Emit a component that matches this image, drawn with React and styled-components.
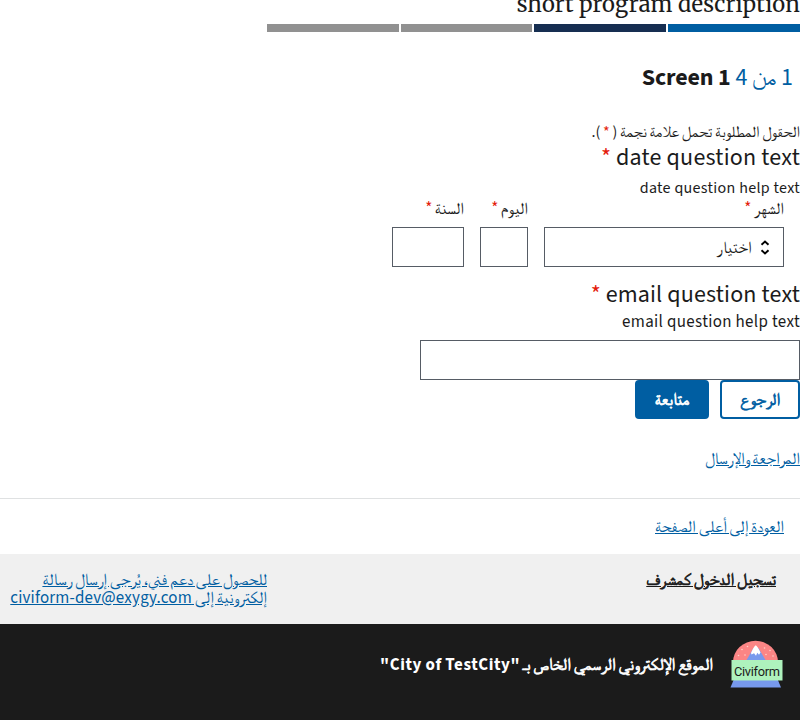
import React from "react";
import styled, { createGlobalStyle } from "styled-components";

const GlobalStyle = createGlobalStyle`
  *, *::before, *::after { box-sizing: border-box; }
  html, body { margin: 0; background: #fff; overflow: hidden; }
  body { font-family: "Source Sans 3", "FreeSerif", sans-serif; color: #1b1b1b; }
`;

const Page = styled.div`
  width: 800px;
  height: 720px;
  overflow: hidden;
  display: flex;
  flex-direction: column;
`;
const Description = styled.p`
  display: flex;
  align-items: flex-end;
  margin: 0;
  height: 24px;
  padding-bottom: 4px;
  font: 22px/32px "Merriweather", "DejaVu Serif", serif;
  letter-spacing: 0.15px;
`;
const Progress = styled.div`
  display: grid;
  grid-template-columns: repeat(4, 1fr);
  gap: 2px;
  width: 533.33px;
  height: 8px;
`;
const Segment = styled.div`
  background: ${(p) => p.$color};
`;
const Heading = styled.h1`
  margin: 30px 0 0;
  padding-right: 7px;
  font-size: 24px;
  line-height: 32px;
  font-weight: 700;
`;
const Counter = styled.span`
  color: #005ea2;
  font-weight: 400;
`;
const Latin = styled.span`
  letter-spacing: ${(p) => p.$track || 0}px;
`;
const BoldArabic = styled.span`
  font-weight: 400;
  -webkit-text-stroke: 0.7px currentColor;
`;
const Star = styled.span`
  color: #e41d0d;
`;
const Required = styled.p`
  margin: 28px 0 0;
  font-size: 16px;
  line-height: 20px;
  word-spacing: -0.5px;
`;
const Question = styled.h2`
  margin: ${(p) => p.$top || 0}px 0 0;
  font-size: 24px;
  font-weight: 400;
  line-height: 31px;
`;
const Help = styled.p`
  margin: ${(p) => p.$top}px 0 ${(p) => p.$bottom}px;
  font-size: ${(p) => p.$size}px;
  line-height: 20px;
`;
const DateRow = styled.div`
  display: flex;
  gap: 16px;
  padding-right: 16px;
`;
const Field = styled.label`
  width: ${(p) => p.$w}px;
  font-size: 16.96px;
  line-height: 20px;
`;
const LabelText = styled.span`
  display: block;
  height: 28px;
  word-spacing: -0.8px;
`;
const Box = styled.div`
  display: flex;
  align-items: center;
  gap: 9px;
  width: ${(p) => p.$w}px;
  height: 40px;
  padding: 1px 13px 0;
  border: 1px solid #565c65;
  font-size: 16.96px;
`;
const Buttons = styled.div`
  display: flex;
  gap: 11px;
`;
const Button = styled.button`
  width: ${(p) => p.$w}px;
  height: 39px;
  padding: 0;
  border: 2px solid #005ea2;
  border-radius: 4px;
  background: ${(p) => (p.$filled ? "#005ea2" : "#fff")};
  color: ${(p) => (p.$filled ? "#fff" : "#005ea2")};
  font-family: inherit;
  font-size: 16.96px;
`;
const Link = styled.a`
  color: ${(p) => (p.$dark ? "#1b1b1b" : "#005ea2")};
  text-decoration: underline;
`;
const Review = styled.div`
  margin: 30px 0 29px;
  font-size: 16.96px;
  line-height: 20px;
  word-spacing: -0.7px;
`;
const ReturnBar = styled.div`
  height: 56px;
  border-top: 1px solid #dfe1e2;
  padding: 18px 16px 0;
  font-size: 16.96px;
  line-height: 20px;
  word-spacing: -0.3px;
`;
const Support = styled.div`
  display: flex;
  justify-content: space-between;
  height: 70px;
  padding: 17px 24px 0 0;
  background: #f0f0f0;
  font-size: 16.96px;
  line-height: 18.4px;
  word-spacing: -0.5px;
`;
const Contact = styled.div`
  width: 267px;
`;
const Footer = styled.footer`
  display: flex;
  height: 96px;
  padding: 16px 17px 0;
  gap: 17px;
  background: #1b1b1b;
  color: #fff;
  font-size: 16.96px;
  font-weight: 700;
  line-height: 50px;
  word-spacing: -0.5px;
`;

const Arrows = () => (
  <svg width="10" height="16" viewBox="0 0 10 16" fill="none" stroke="#000" strokeWidth="1.9">
    <path d="M1.500 4.700 5 1.500 8.500 4.700M1.500 10.300 5 13.500 8.500 10.300" />
  </svg>
);
const Logo = () => (
  <svg width="53" height="48" viewBox="0 0 53 48">
    <path d="M3 22a22.500 21.200 0 0 1 45 0z" fill="#fb8585" />
    <path d="M16 21 23.500 8h5L36 21z" fill="#7799ed" />
    <path d="M25.800 5.200q2 1.500 4.700 7.300l-1.500 2.200-1.700-2-1.300 3-2-2.500-2.500 1.200-.5-1.500q2.500-6 4.800-7.700z" fill="#fff" />
    <path d="M4 39h43.500l3.500 8.500H.5z" fill="#7799ed" />
    <path d="M1.500 20h51v20.500h-51z" fill="#aef2bd" />
    <g fill="#ffd0c8">
      <circle cx="12" cy="9.500" r=".8" /><circle cx="8.500" cy="15.500" r=".8" /><circle cx="15" cy="15" r=".8" />
      <circle cx="17.500" cy="6.500" r=".8" /><circle cx="34.500" cy="8" r=".8" /><circle cx="40" cy="10.500" r=".8" />
      <circle cx="36" cy="14.500" r=".8" /><circle cx="43" cy="16" r=".8" />
    </g>
    <text x="27" y="35.500" textAnchor="middle" direction="ltr" textLength="46" fontFamily="Roboto, sans-serif" fontWeight="400" fontSize="12.800" fill="#1b1b1b">Civiform</text>
  </svg>
);

const RequiredMark = () => <Star>*</Star>;

export default function App() {
  return (
    <Page dir="rtl">
      <GlobalStyle />
      <Description>short program description</Description>
      <Progress>
        <Segment $color="#005ea2" />
        <Segment $color="#162e51" />
        <Segment $color="#919191" />
        <Segment $color="#919191" />
      </Progress>
      <Heading><Counter>1 من 4</Counter> <Latin $track={-0.15}>Screen 1</Latin></Heading>
      <Required>الحقول المطلوبة تحمل علامة نجمة ( <RequiredMark /> ).</Required>
      <Question><Latin $track={0.22}>date question text</Latin> <RequiredMark /></Question>
      <Help $top={5} $bottom={1} $size={16}><Latin $track={0.32}>date question help text</Latin></Help>
      <DateRow>
        <Field $w={240}><LabelText>الشهر <RequiredMark /></LabelText><Box $w={240}><Arrows />اختيار</Box></Field>
        <Field $w={48}><LabelText>اليوم <RequiredMark /></LabelText><Box $w={48} /></Field>
        <Field $w={72}><LabelText>السنة <RequiredMark /></LabelText><Box $w={72} /></Field>
      </DateRow>
      <Question $top={12}><Latin $track={0.16}>email question text</Latin> <RequiredMark /></Question>
      <Help $top={2} $bottom={8} $size={16.96}><Latin $track={0.34}>email question help text</Latin></Help>
      <Box $w={380} />
      <Buttons>
        <Button $w={80}><BoldArabic>الرجوع</BoldArabic></Button>
        <Button $w={74} $filled><BoldArabic>متابعة</BoldArabic></Button>
      </Buttons>
      <Review><Link>المراجعة والإرسال</Link></Review>
      <ReturnBar><Link>العودة إلى أعلى الصفحة</Link></ReturnBar>
      <Support>
        <Link $dark><BoldArabic>تسجيل الدخول كمشرف</BoldArabic></Link>
        <Contact><Link>للحصول على دعم فني، يُرجى إرسال رسالة إلكترونية إلى <Latin $track={0.18}>civiform-dev@exygy.com</Latin></Link></Contact>
      </Support>
      <Footer>
        <Logo />
        <span><BoldArabic>الموقع الإلكتروني الرسمي الخاص بـ</BoldArabic> <Latin $track={0.6}>"City of TestCity"</Latin></span>
      </Footer>
    </Page>
  );
}
